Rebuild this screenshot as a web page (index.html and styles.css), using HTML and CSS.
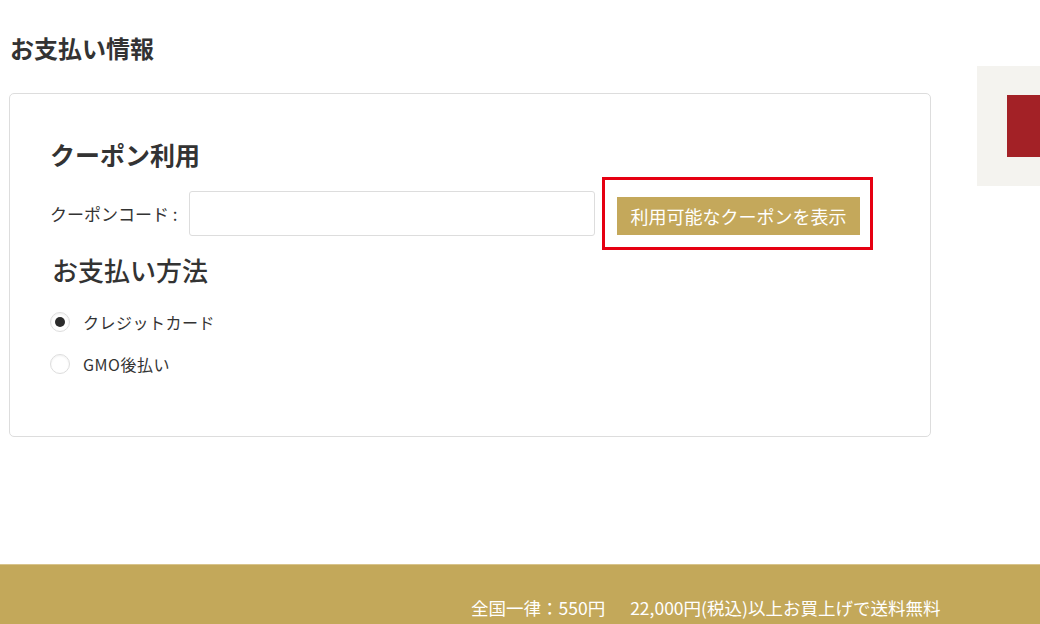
FILE: index.html
```html
<!DOCTYPE html>
<html lang="ja">
<head>
  <meta charset="utf-8">
  <title>お支払い情報</title>
  <link rel="stylesheet" href="styles.css">
</head>
<body>
  <div class="page">
    <main class="main">
      <h1 class="page-title">お支払い情報</h1>

      <!-- 支払い情報カード -->
      <section class="card">
        <h2 class="card-heading">クーポン利用</h2>
        <div class="coupon-row">
          <label class="coupon-label" for="couponCode">クーポンコード :</label>
          <input class="coupon-input" id="couponCode" type="text">
          <div class="highlight">
            <button class="coupon-btn" type="button">利用可能なクーポンを表示</button>
          </div>
        </div>

        <h2 class="card-heading method">お支払い方法</h2>
        <div class="radio-list">
          <label class="radio-item">
            <span class="radio checked"></span>
            クレジットカード
          </label>
          <label class="radio-item">
            <span class="radio"></span>
            GMO後払い
          </label>
        </div>
      </section>
    </main>

    <aside class="side">
      <div class="side-block"></div>
    </aside>
  </div>

  <footer class="footer">
    <p class="footer-text">全国一律：550円<span class="footer-free">22,000円(税込)以上お買上げで送料無料</span></p>
  </footer>
</body>
</html>
```

FILE: styles.css
```css
body {
  margin: 0;
  font-family: "Noto Sans CJK JP", "Noto Sans", sans-serif;
  color: #333;
  background: #fff;
  height: 624px;
  display: flex;
  flex-direction: column;
  overflow: hidden;
}

.page {
  display: flex;
  flex: 1;
  padding-top: 33px;
}

.main {
  width: 922px;
  margin-left: 9px;
}

.page-title {
  margin: 0 0 30px 1px;
  font-size: 24px;
  line-height: 30px;
  font-weight: bold;
}

.card {
  border: 1px solid #ddd;
  border-radius: 5px;
  padding: 43px 40px 57px 40px;
  height: 344px;
  box-sizing: border-box;
}

.card-heading {
  margin: 0;
  font-size: 25px;
  line-height: 34px;
  font-weight: bold;
}

.card-heading.method {
  margin: 3px 0 0 2px;
  font-size: 26px;
  font-weight: 500;
}

.coupon-row {
  display: flex;
  align-items: center;
  margin-top: 6px;
}

.coupon-label {
  font-size: 17px;
  width: 139px;
  white-space: nowrap;
}

.coupon-input {
  width: 406px;
  height: 45px;
  box-sizing: border-box;
  border: 1px solid #ddd;
  border-radius: 3px;
  margin: 0;
}

.highlight {
  margin-left: 7px;
  border: 3px solid #e60012;
  padding: 17px 10px 12px 12px;
}

.coupon-btn {
  display: block;
  width: 243px;
  height: 38px;
  padding: 0;
  border: none;
  background: #c4a85b;
  color: #fff;
  font-family: inherit;
  font-size: 18px;
  white-space: nowrap;
  cursor: pointer;
}

.radio-list {
  margin-top: 21px;
  display: flex;
  flex-direction: column;
  gap: 14px;
}

.radio-item {
  display: flex;
  align-items: center;
  height: 28px;
  font-size: 16px;
  letter-spacing: 0.5px;
}

.radio {
  width: 20px;
  height: 20px;
  box-sizing: border-box;
  border: 1px solid #ddd;
  border-radius: 50%;
  margin: 0 13px 0 0;
  position: relative;
  box-shadow: inset 0 1px 2px rgba(0, 0, 0, 0.06);
}

.radio.checked::after {
  content: "";
  position: absolute;
  left: 4px;
  top: 4px;
  width: 10px;
  height: 10px;
  border-radius: 50%;
  background: #2b2b2b;
}

.side {
  margin-left: 46px;
  margin-top: 33px;
  flex: 1;
  height: 120px;
  background: #f4f3ef;
  padding: 29px 0 0 30px;
  box-sizing: border-box;
}

.side-block {
  height: 62px;
  background: #a32126;
}

.footer {
  height: 59px;
  background: #c3a85a;
  border-top: 1px solid #d8c48c;
}

.footer-text {
  margin: 0;
  padding: 32px 0 0 471px;
  font-size: 17.5px;
  line-height: 22px;
  color: #fff;
  white-space: nowrap;
}

.footer-free {
  margin-left: 25px;
}
```
